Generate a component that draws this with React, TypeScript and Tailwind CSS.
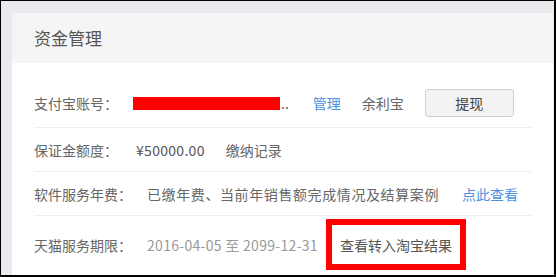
const font = { fontFamily: '"Noto Sans CJK SC", "Noto Sans", sans-serif' };

function Row({
  label,
  children,
  last,
  height,
}: {
  label: string;
  children: React.ReactNode;
  last?: boolean;
  height: string;
}) {
  return (
    <div
      className={`flex items-center ${height} ${
        last ? "" : "border-b border-[#eeeeee]"
      }`}
    >
      <span className="mr-[15px] text-[#666666]">{label}</span>
      {children}
    </div>
  );
}

export default function App() {
  return (
    <div
      className="w-[556px] h-[277px] bg-[#e9eaee] border-l border-t border-r-[2px] border-b-[2px] border-black pl-[11px] pt-[12px] pr-[1px] flex flex-col overflow-hidden"
      style={font}
    >
      <div className="flex-1 bg-white flex flex-col">
        {/* Header */}
        <div className="h-[50px] bg-[#f5f5f5] flex items-center px-[22px]">
          <h1 className="text-[17px] text-[#555555]">资金管理</h1>
        </div>

        {/* Rows */}
        <div className="pt-[16px] pl-[22px] pr-[22px] text-[14px] leading-none">
          <Row label="支付宝账号：" height="h-[49px]">
            <span className="block w-[147px] h-[13px] bg-[#ff0000]" />
            <span className="text-[#666666] ml-[1px]">..</span>
            <span className="ml-[24px] text-[#4a90e2]">管理</span>
            <span className="ml-[21px] text-[#666666]">余利宝</span>
            <button className="ml-[21px] w-[89px] h-[28px] bg-[#f3f3f3] border border-[#cfcfcf] rounded-[3px] text-[#444444] text-[14px]">
              提现
            </button>
          </Row>
          <Row label="保证金额度：" height="h-[44px]">
            <span className="text-[#555555] ml-[3px] tracking-[0.3px]">¥50000.00</span>
            <span className="ml-[21px] text-[#666666]">缴纳记录</span>
          </Row>
          <Row label="软件服务年费：" height="h-[44px]">
            <span className="text-[#666666] tracking-[0.6px]">
              已缴年费、当前年销售额完成情况及结算案例
            </span>
            <span className="ml-[23px] text-[#4a90e2]">点此查看</span>
          </Row>
          <Row label="天猫服务期限：" height="h-[57px]" last>
            <span className="text-[#999999] tracking-[0.3px]">2016-04-05 至 2099-12-31</span>
            <span className="ml-[8px] h-[51px] border-[6px] border-[#ff0000] flex items-center px-[8px] text-[#555555]">
              查看转入淘宝结果
            </span>
          </Row>
        </div>
      </div>
    </div>
  );
}
